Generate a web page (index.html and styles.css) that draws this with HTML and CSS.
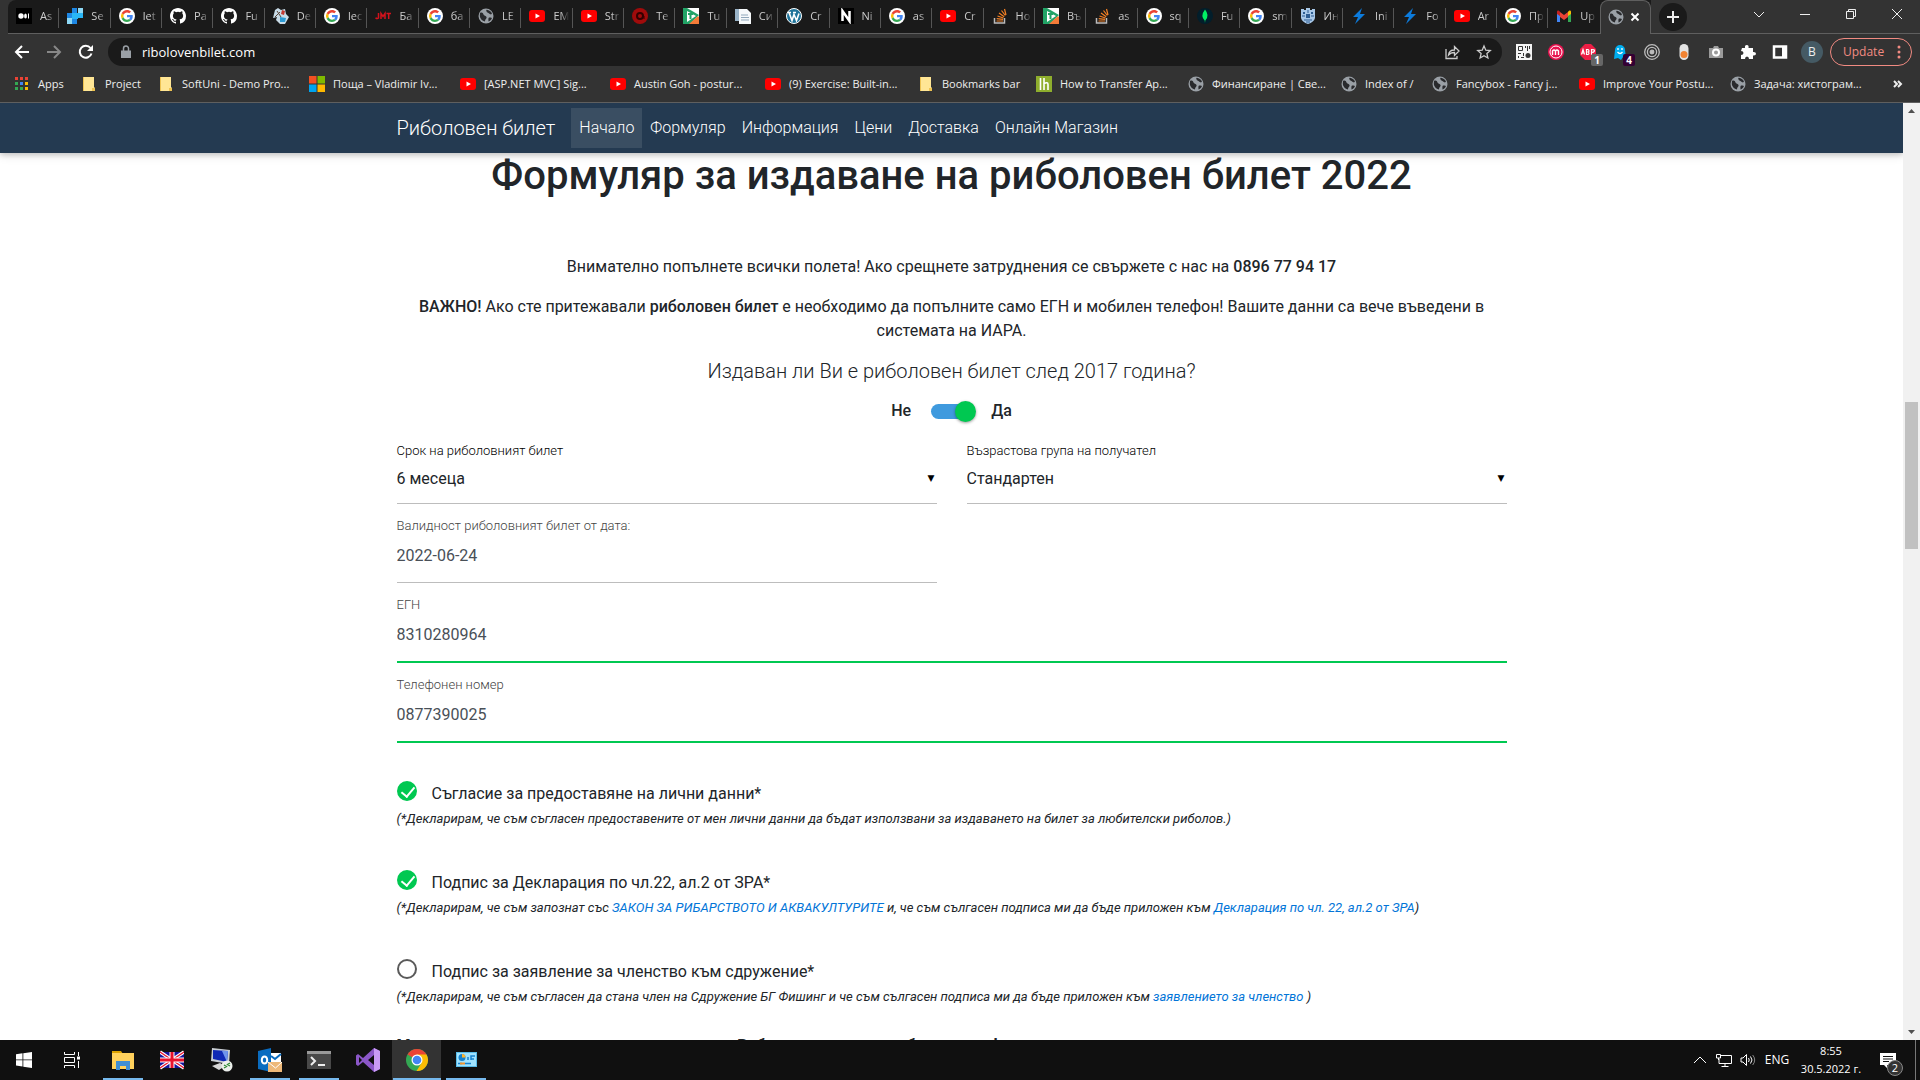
FILE: index.html
```html
<!DOCTYPE html>
<html lang="bg">
<head>
<meta charset="utf-8">
<title>Риболовен билет</title>
<link rel="stylesheet" href="styles.css">
</head>
<body>
<svg class="sprite" aria-hidden="true">
  <symbol id="google" viewBox="0 0 16 16"><circle cx="8" cy="8" r="8" fill="#fff"/><g transform="translate(2 2) scale(.25)"><path fill="#ea4335" d="M24 9.500c3.500 0 6.700 1.200 9.200 3.600l6.900-6.900C35.900 2.400 30.500 0 24 0 14.600 0 6.500 5.400 2.600 13.200l8 6.200C12.400 13.700 17.700 9.500 24 9.500z"/><path fill="#4285f4" d="M47 24.600c0-1.600-.2-3.100-.4-4.600H24v9h12.900c-.6 3-2.200 5.500-4.700 7.200l7.700 6C44.400 38 47 31.800 47 24.600z"/><path fill="#fbbc05" d="M10.500 28.600a14.500 14.500 0 0 1 0-9.200l-8-6.200a24 24 0 0 0 0 21.600z"/><path fill="#34a853" d="M24 48c6.500 0 11.900-2.100 15.900-5.800l-7.700-6c-2.200 1.500-4.900 2.300-8.200 2.300-6.300 0-11.600-4.200-13.500-9.900l-8 6.200C6.500 42.600 14.600 48 24 48z"/></g></symbol>
  <symbol id="youtube" viewBox="0 0 16 16"><rect y="2" width="16" height="12" rx="3" fill="#f00"/><path d="M6.500 5.500v5L11 8z" fill="#fff"/></symbol>
  <symbol id="github" viewBox="0 0 16 16"><path fill="#fff" d="M8 0C3.580 0 0 3.580 0 8c0 3.540 2.290 6.530 5.470 7.590.4.070.55-.17.55-.38 0-.19-.01-.82-.01-1.490-2.010.37-2.530-.49-2.690-.94-.09-.23-.48-.94-.82-1.130-.28-.15-.68-.52-.01-.53.63-.01 1.080.58 1.230.82.72 1.210 1.870.87 2.330.66.070-.52.28-.87.51-1.070-1.780-.2-3.640-.89-3.640-3.950 0-.87.31-1.590.82-2.150-.08-.2-.36-1.020.08-2.120 0 0 .67-.21 2.200.82a7.600 7.600 0 0 1 4 0c1.530-1.040 2.200-.82 2.200-.82.44 1.100.16 1.920.08 2.120.51.56.82 1.270.82 2.150 0 3.070-1.870 3.750-3.650 3.950.29.25.54.73.54 1.480 0 1.070-.01 1.930-.01 2.200 0 .21.15.46.55.38A8 8 0 0 0 16 8c0-4.420-3.580-8-8-8z"/></symbol>
  <symbol id="globe" viewBox="0 0 16 16"><circle cx="8" cy="8" r="7.500" fill="#9aa0a6"/><path fill="#292a2d" d="M2 5c2-1 3 0 3.500 1.500S8 7.500 8.500 9 7 11 7 13.500C4 13 2 10.500 1.800 8zM8 2c1 1 0 2 1.500 2.500S11 6 13 6.500l1-1C13 3.500 11 2 9 1.800zM11 9.500c1 0 2 0 3 .5-.7 2-2 3-3.500 3.500 0-1.500-.5-3 .5-4z"/></symbol>
  <symbol id="folder" viewBox="0 0 16 16"><path fill="#ffe695" d="M2 1h11v10l1 1v3H2z"/><path fill="#eec351" d="M2 1h1v14H2zM11 12h3v3h-3z"/></symbol>
  <symbol id="medium" viewBox="0 0 16 16"><path d="M0 0h16v16H0z"/><circle cx="5" cy="8" r="2.700" fill="#fff"/><ellipse cx="9.500" cy="8" rx="1.400" ry="2.500" fill="#fff"/><path d="M12 5.500h1v5h-1z" fill="#fff"/></symbol>
  <symbol id="squares" viewBox="0 0 16 16"><path fill="#1e88e5" d="M5 0h5v5H5zM0 5h5v5H0z"/><path fill="#29b6f6" d="M5 5h6v6H5zM11 5h5v5h-5z"/><path fill="#8ed8f5" d="M11 0h5v5h-5zM0 10h5v6H0z"/><path fill="#1e88e5" d="M5 11h5v5H5z"/></symbol>
  <symbol id="painter" viewBox="0 0 16 16"><path fill="#c9dce8" d="m2 2 3-2 3 2 4-1 1 5 3 3-4 7H7L3 12l1-3-4 1z"/><path fill="#2d9bd4" d="m7 9 6 1-1 4H7z"/><path fill="#c53b32" d="m9 2 3 1-1 4-3-1z"/><path d="m4 3 4 6M2 9l5-5" stroke="#5a463a"/></symbol>
  <symbol id="jmt" viewBox="0 0 16 16"><path fill="none" stroke="#d3121c" stroke-width="1.500" d="M3.500 5v5q-1 1-3 0M6 11V5.500l2 3 2-3V11M11.500 5.500H16M13.700 5v6"/></symbol>
  <symbol id="target" viewBox="0 0 16 16"><circle cx="8" cy="8" r="8" fill="#a00b0b"/><circle cx="8" cy="8" r="3" fill="none" stroke="#300" stroke-width="2"/><path d="M10 8h2v3" fill="none" stroke="#300"/></symbol>
  <symbol id="tick" viewBox="0 0 16 16"><path fill="#fff" d="M0 0h16v16H0z"/><path fill="#21a366" d="M0 0h4l12 7-9 9H0z"/><path fill="#f47b38" d="m6 16 9-8 1 1v7z"/><path fill="#fff" d="M4 3 13 8l-9 6z"/><path d="M5 6h5M7.500 6v5" stroke="#21a366" stroke-width="2"/></symbol>
  <symbol id="docs" viewBox="0 0 16 16"><path fill="#9bb5c9" d="M0 1h9v12H0z"/><path fill="#f6f9fb" d="M4 1h8l4 4v11H4z"/><path d="M6 7h7M6 9.500h8M6 12h8" stroke="#91a8bb"/></symbol>
  <symbol id="wordpress" viewBox="0 0 16 16"><circle cx="8" cy="8" r="7.500" fill="#21759b" stroke="#fff"/><path fill="none" stroke="#fff" stroke-width="1.600" d="m3 4.500 3 8 2-6 2.500 6 2.500-7M2 4.500h3M7 4.500h3"/></symbol>
  <symbol id="notion" viewBox="0 0 16 16"><path d="M0 0h16v16H0z"/><path d="M4.500 13V3l7 10V3" stroke="#fff" stroke-width="2.500" fill="none"/></symbol>
  <symbol id="stack" viewBox="0 0 16 16"><path d="M2.500 10v5h10v-5" fill="none" stroke="#bcbbbb" stroke-width="1.500"/><path d="M4.500 13h6.500M4.700 10.700l6.300.7M5.500 8l6 2M7 5l5.200 3.700M9.500 2.500l3.800 5M12.500 1l1.500 6" stroke="#f48024" stroke-width="1.200"/></symbol>
  <symbol id="leaf" viewBox="0 0 16 16"><circle cx="8" cy="8" r="8" fill="#021e2b"/><path fill="#00ed64" d="M8 1.500q5 6 .3 11L8 15l-.3-2.500Q3 8 8 1.500z"/></symbol>
  <symbol id="crest" viewBox="0 0 16 16"><path fill="#a8c8e8" d="M1 1h3v1h2V0h4v2h2V1h3v9q-1 4-7 6-6-2-7-6z"/><path d="M3 4h2v2H3zm8 0h2v2h-2zM6 6h4v4H6z" fill="#2e5d92"/><path d="M2 8h3m6 0h3M4 12h8M8 2v3M6 14h4" stroke="#2e5d92"/></symbol>
  <symbol id="bolt" viewBox="0 0 16 16"><path fill="#0c7bdc" d="M11 0 2 9h5l-3 7 10-10H9l2-6z"/></symbol>
  <symbol id="gmail" viewBox="0 0 16 16"><path fill="#4285f4" d="M1 14V4l3 2v8z"/><path fill="#34a853" d="M15 14V4l-3 2v8z"/><path fill="#ea4335" d="M4 9V4l4 3 4-3v5l-4 3z"/><path fill="#c5221f" d="M1 4c0-2 2-2 3 0v4L1 6z"/><path fill="#fbbc04" d="M15 4c0-2-2-2-3 0v4l3-2z"/></symbol>
  <symbol id="apps" viewBox="0 0 16 16"><path fill="#ea4335" d="M1 1h3v3H1zm5 0h3v3H6zm5 0h3v3h-3z"/><path fill="#34a853" d="M1 6h3v3H1zm0 5h3v3H1z"/><path fill="#4285f4" d="M6 6h3v3H6z"/><path fill="#fbbc04" d="M11 6h3v3h-3zm0 5h3v3h-3z"/><path fill="#34a853" d="M6 11h3v3H6z"/></symbol>
  <symbol id="microsoft" viewBox="0 0 16 16"><path fill="#f25022" d="M0 0h7.500v7.500H0z"/><path fill="#7fba00" d="M8.500 0H16v7.500H8.500z"/><path fill="#00a4ef" d="M0 8.500h7.500V16H0z"/><path fill="#ffb900" d="M8.500 8.500H16V16H8.500z"/></symbol>
  <symbol id="lh" viewBox="0 0 16 16"><path fill="#8fae2d" d="M0 0h16v16H0z"/><path d="M4.500 2v12M8 2v12M8 7.500q4-2 4 1V14" fill="none" stroke="#fff" stroke-width="1.600"/></symbol>
</svg>

<header class="browser">
  <div class="tabstrip">
    <div class="tabs">
      <button class="tab"><svg><use href="#medium"/></svg><span>As</span></button>
      <button class="tab"><svg><use href="#squares"/></svg><span>Se</span></button>
      <button class="tab"><svg><use href="#google"/></svg><span>let</span></button>
      <button class="tab"><svg><use href="#github"/></svg><span>Pa</span></button>
      <button class="tab"><svg><use href="#github"/></svg><span>Fu</span></button>
      <button class="tab"><svg><use href="#painter"/></svg><span>De</span></button>
      <button class="tab"><svg><use href="#google"/></svg><span>lec</span></button>
      <button class="tab"><svg><use href="#jmt"/></svg><span>Ба</span></button>
      <button class="tab"><svg><use href="#google"/></svg><span>ба</span></button>
      <button class="tab"><svg><use href="#globe"/></svg><span>LE</span></button>
      <button class="tab"><svg><use href="#youtube"/></svg><span>EM</span></button>
      <button class="tab"><svg><use href="#youtube"/></svg><span>Str</span></button>
      <button class="tab"><svg><use href="#target"/></svg><span>Te</span></button>
      <button class="tab"><svg><use href="#tick"/></svg><span>Tu</span></button>
      <button class="tab"><svg><use href="#docs"/></svg><span>Си</span></button>
      <button class="tab"><svg><use href="#wordpress"/></svg><span>Cr</span></button>
      <button class="tab"><svg><use href="#notion"/></svg><span>Ni</span></button>
      <button class="tab"><svg><use href="#google"/></svg><span>as</span></button>
      <button class="tab"><svg><use href="#youtube"/></svg><span>Cr</span></button>
      <button class="tab"><svg><use href="#stack"/></svg><span>Ho</span></button>
      <button class="tab"><svg><use href="#tick"/></svg><span>Въ</span></button>
      <button class="tab"><svg><use href="#stack"/></svg><span>as</span></button>
      <button class="tab"><svg><use href="#google"/></svg><span>sq</span></button>
      <button class="tab"><svg><use href="#leaf"/></svg><span>Fu</span></button>
      <button class="tab"><svg><use href="#google"/></svg><span>sm</span></button>
      <button class="tab"><svg><use href="#crest"/></svg><span>Ин</span></button>
      <button class="tab"><svg><use href="#bolt"/></svg><span>Ini</span></button>
      <button class="tab"><svg><use href="#bolt"/></svg><span>Fo</span></button>
      <button class="tab"><svg><use href="#youtube"/></svg><span>Ar</span></button>
      <button class="tab"><svg><use href="#google"/></svg><span>Пр</span></button>
      <button class="tab tab-last"><svg><use href="#gmail"/></svg><span>Up</span></button>
      <button class="tab tab-active" aria-label="Риболовен билет"><svg><use href="#globe"/></svg><svg class="tab-close" viewBox="0 0 16 16"><path d="m4.500 4.500 7 7m0-7-7 7"/></svg></button>
    </div>
    <div class="tab-tools">
      <button class="new-tab" aria-label="New tab"><svg viewBox="0 0 16 16"><path d="M8 2v12M2 8h12"/></svg></button>
      <div class="window-controls">
        <button aria-label="Search tabs"><svg viewBox="0 0 12 12"><path d="m1 4 5 5 5-5"/></svg></button>
        <button aria-label="Minimize"><svg viewBox="0 0 12 12"><path d="M1 6.500h10"/></svg></button>
        <button aria-label="Restore"><svg viewBox="0 0 12 12"><path d="M1.500 3.500h7v7h-7zM3.500 3V1.500h7v7H9"/></svg></button>
        <button aria-label="Close"><svg viewBox="0 0 12 12"><path d="m1 1 10 10M11 1 1 11"/></svg></button>
      </div>
    </div>
  </div>

  <div class="toolbar">
    <div class="nav-buttons">
      <button aria-label="Back"><svg viewBox="0 0 16 16"><path d="M15 8H2m6-6L2 8l6 6"/></svg></button>
      <button class="dim" aria-label="Forward"><svg viewBox="0 0 16 16"><path d="M1 8h13M8 2l6 6-6 6"/></svg></button>
      <button aria-label="Reload"><svg viewBox="0 0 16 16"><path d="M13.500 9.500A6 6 0 1 1 12.500 4"/><path class="solid" d="M15 1v6H9z"/></svg></button>
    </div>
    <div class="omnibox">
      <svg viewBox="0 0 16 16"><path fill="#9aa0a6" d="M3 6.500h10V14H3z"/><path fill="none" stroke="#9aa0a6" stroke-width="1.500" d="M5.500 7V4.500a2.500 2.500 0 0 1 5 0V7"/></svg>
      <input type="text" value="ribolovenbilet.com" aria-label="Address">
      <button aria-label="Share"><svg viewBox="0 0 16 16"><path d="M2 5v9.500h11V12M4.500 11q.5-5 6-5V2.500l4.500 4.500-4.500 4.500V8.500q-4 0-6 2.500z"/></svg></button>
      <button aria-label="Bookmark"><svg viewBox="0 0 16 16"><path d="m8 2 1.800 4.200 4.500.4-3.400 3 1 4.400L8 11.700 4.100 14l1-4.400-3.400-3 4.500-.4z"/></svg></button>
    </div>
    <div class="extensions">
      <button aria-label="QR"><svg viewBox="0 0 16 16"><path fill="#f4f4f4" d="M0 0h16v16H0z"/><path fill="none" stroke="#333" d="M2.500 2.500h4v4h-4zM9.500 2v2m2-2v5m2-5v3M2 9.500h3M2.500 12v2M5 13.500h3M7.500 9v3"/><circle cx="12" cy="11.500" r="2.500" fill="#333"/></svg></button>
      <button aria-label="Momentum"><svg viewBox="0 0 16 16"><circle cx="8" cy="8" r="8" fill="#e8124f"/><circle cx="8" cy="8" r="6" fill="none" stroke="#fff"/><path fill="none" stroke="#fff" stroke-width="1.400" d="M4.500 11V7q1.500-2 3 0v4m0-4q1.500-2 3 0v4"/></svg></button>
      <button aria-label="AdBlock Plus"><svg viewBox="0 0 16 16"><path fill="#ed1e45" d="M5 0h6l5 5v6l-5 5H5l-5-5V5z"/><path fill="none" stroke="#fff" stroke-width="1.200" d="M1.500 10.500 3 5.500l1.500 5M2 9h2M6.500 5.500v5h1.500q2-1.500 0-2.500 2-1 0-2.500zM11.500 11V5.500q3.500 0 3 1.500t-3 1.500"/></svg><span class="badge">1</span></button>
      <button aria-label="Ghostery"><svg viewBox="0 0 16 16"><path fill="#00aef0" d="M3 6a5 5 0 0 1 10 0l1 8-3-1-2 3-3-2-4 1z"/><path d="M6 4v2m4-2v2M5.500 8q2.500 3 5 0" fill="none" stroke="#fff" stroke-width="1.300"/></svg><span class="badge badge-purple">4</span></button>
      <button aria-label="Rings"><svg viewBox="0 0 16 16" fill="none" stroke="#bdbdbd" stroke-width="1.300"><circle cx="8" cy="8" r="7.300"/><circle cx="8" cy="8" r="4.600"/><circle cx="8" cy="8" r="1.800" fill="#bdbdbd"/></svg></button>
      <button aria-label="Switch"><svg viewBox="0 0 16 16"><rect x="3.500" y="0" width="9" height="16" rx="4.500" fill="#e3e3e3"/><circle cx="8" cy="10.500" r="3.500" fill="#f28332"/></svg></button>
      <button aria-label="Camera"><svg viewBox="0 0 16 16"><path fill="#9b9b9b" d="M1 4h4l1-2h4l1 2h4v10H1z"/><circle cx="8" cy="8.500" r="3" fill="#9b9b9b" stroke="#fff" stroke-width="2"/></svg></button>
      <button aria-label="Extensions"><svg viewBox="0 0 16 16"><path fill="#fff" d="M2 4h3q-.5-3 1.800-3T8.500 4H13v4q3-.3 3 1.800T13 11.500V15H9q0-2.500-2-2.500T5 15H1v-4q2.500 0 2.500-2T1 7z"/></svg></button>
      <button aria-label="Side panel"><svg viewBox="0 0 16 16"><path d="M2 2.500h12v11H2z" fill="none" stroke="#fff" stroke-width="2.500"/><path fill="#fff" d="M10 2h4v12h-4z"/></svg></button>
      <button class="avatar" aria-label="Profile">B</button>
    </div>
    <button class="update">Update<svg viewBox="0 0 4 16"><circle cx="2" cy="3" r="1.500"/><circle cx="2" cy="8" r="1.500"/><circle cx="2" cy="13" r="1.500"/></svg></button>
  </div>

  <nav class="bookmarks" aria-label="Bookmarks">
    <a href="#"><svg><use href="#apps"/></svg>Apps</a>
    <a href="#"><svg><use href="#folder"/></svg>Project</a>
    <a href="#"><svg><use href="#folder"/></svg>SoftUni - Demo Pro...</a>
    <a href="#"><svg><use href="#microsoft"/></svg>Поща – Vladimir Iv...</a>
    <a href="#"><svg><use href="#youtube"/></svg>[ASP.NET MVC] Sig...</a>
    <a href="#"><svg><use href="#youtube"/></svg>Austin Goh - postur...</a>
    <a href="#"><svg><use href="#youtube"/></svg>(9) Exercise: Built-in...</a>
    <a href="#"><svg><use href="#folder"/></svg>Bookmarks bar</a>
    <a href="#"><svg><use href="#lh"/></svg>How to Transfer Ap...</a>
    <a href="#"><svg><use href="#globe"/></svg>Финансиране | Све...</a>
    <a href="#"><svg><use href="#globe"/></svg>Index of /</a>
    <a href="#"><svg><use href="#globe"/></svg>Fancybox - Fancy j...</a>
    <a href="#"><svg><use href="#youtube"/></svg>Improve Your Postu...</a>
    <a href="#"><svg><use href="#globe"/></svg>Задача: хистограм...</a>
    <button aria-label="More bookmarks"><svg viewBox="0 0 12 12"><path d="m2 3 3 3-3 3m4-6 3 3-3 3"/></svg></button>
  </nav>
</header>

<div class="viewport">
  <div class="page">
    <nav class="site-nav">
      <div class="container">
        <a class="brand" href="#">Риболовен билет</a>
        <a class="link current" href="#">Начало</a>
        <a class="link" href="#">Формуляр</a>
        <a class="link" href="#">Информация</a>
        <a class="link" href="#">Цени</a>
        <a class="link" href="#">Доставка</a>
        <a class="link" href="#">Онлайн Магазин</a>
      </div>
    </nav>
    <main class="container">
      <h1>Формуляр за издаване на риболовен билет 2022</h1>
      <div class="intro">
        <p>Внимателно попълнете всички полета! Ако срещнете затруднения се свържете с нас на <strong>0896 77 94 17</strong></p>
        <p><strong>ВАЖНО!</strong> Ако сте притежавали <strong>риболовен билет</strong> е необходимо да попълните само ЕГН и мобилен телефон! Вашите данни са вече въведени в системата на ИАРА.</p>
        <h2>Издаван ли Ви е риболовен билет след 2017 година?</h2>
      </div>
      <form>
        <label class="switch">Не<input type="checkbox" checked>Да</label>
        <div class="row">
          <div class="field field-select">
            <label for="term">Срок на риболовният билет</label>
            <select id="term"><option>6 месеца</option></select>
            <span class="caret" aria-hidden="true">▼</span>
          </div>
          <div class="field field-select">
            <label for="age">Възрастова група на получател</label>
            <select id="age"><option>Стандартен</option></select>
            <span class="caret" aria-hidden="true">▼</span>
          </div>
        </div>
        <div class="row">
          <div class="field">
            <label for="date">Валидност риболовният билет от дата:</label>
            <input type="text" id="date" value="2022-06-24">
          </div>
        </div>
        <div class="field valid">
          <label for="egn">ЕГН</label>
          <input type="text" id="egn" value="8310280964">
        </div>
        <div class="field valid">
          <label for="phone">Телефонен номер</label>
          <input type="text" id="phone" value="0877390025">
        </div>
        <div class="consents">
          <div class="consent">
            <div class="consent-head"><input type="checkbox" id="c1" checked><label for="c1">Съгласие за предоставяне на лични данни*</label></div>
            <p>(*Декларирам, че съм съгласен предоставените от мен лични данни да бъдат използвани за издаването на билет за любителски риболов.)</p>
          </div>
          <div class="consent">
            <div class="consent-head"><input type="checkbox" id="c2" checked><label for="c2">Подпис за Декларация по чл.22, ал.2 от ЗРА*</label></div>
            <p>(*Декларирам, че съм запознат със <a href="#">ЗАКОН ЗА РИБАРСТВОТО И АКВАКУЛТУРИТЕ</a> и, че съм сългасен подписа ми да бъде приложен към <a href="#">Декларация по чл. 22, ал.2 от ЗРА</a>)</p>
          </div>
          <div class="consent">
            <div class="consent-head"><input type="checkbox" id="c3"><label for="c3">Подпис за заявление за членство към сдружение*</label></div>
            <p>(*Декларирам, че съм съгласен да стана член на Сдружение БГ Фишинг и че съм сългасен подписа ми да бъде приложен към <a href="#">заявлението за членство</a> )</p>
          </div>
        </div>
        <p class="delivery">Моля посочете мястото си за получаване на Риболовният ви е нов билет, или формуляр</p>
      </form>
    </main>
  </div>
  <div class="scrollbar" aria-hidden="true">
    <svg viewBox="0 0 17 17"><path d="m5 10 3.500-4L12 10z"/></svg>
    <div class="thumb"></div>
    <svg viewBox="0 0 17 17"><path d="m5 7 3.500 4L12 7z"/></svg>
  </div>
</div>

<footer class="taskbar">
  <button aria-label="Start"><svg viewBox="0 0 16 16"><path fill="#fff" d="m0 2.300 6.500-1v6.200H0zm7.300-1.100L16 0v7.500H7.300zM0 8.300h6.500v6.200l-6.500-1zm7.300 0H16V16l-8.700-1.200z"/></svg></button>
  <button class="task-view" aria-label="Task view"><svg viewBox="0 0 16 16" fill="none" stroke="#fff"><path d="M.5 0v2.500h10V0M.5 5.500h10v5H.5zM.5 16v-2.500h10V16M14.500 0v4m0 5v7"/><path d="M13 4.500h3v3h-3z" fill="#fff" stroke="none"/></svg></button>
  <button class="app running" aria-label="File Explorer"><svg viewBox="0 0 24 24"><path fill="#dba100" d="M1 3h9l2 3v3H1z"/><path fill="#ffd15c" d="M1 5h22v16H1z"/><path fill="#3f8fd4" d="M5 13h14v9h-4v-4H9v4H5z"/></svg></button>
  <button class="app" aria-label="Language"><svg viewBox="0 0 24 24"><path fill="#14149c" d="M0 4h24v16H0z"/><path d="m0 4 24 16M24 4 0 20" stroke="#fff" stroke-width="3.500"/><path d="m0 4 24 16M24 4 0 20" stroke="#e8112d" stroke-width="1.300"/><path d="M12 4v16M0 12h24" stroke="#fff" stroke-width="5"/><path d="M12 4v16M0 12h24" stroke="#e8112d" stroke-width="3"/></svg></button>
  <button class="app" aria-label="Remote Desktop"><svg viewBox="0 0 24 24"><path fill="#c9ced4" d="m3 0 18 2-1 14L2 13z"/><path fill="#1029b5" d="m4 2 15 1-1 11L4 11z"/><path fill="#6f94ec" d="m13 3 6 0-1 11z"/><path fill="#d7d7d7" d="m3 18 8-3 5 3-6 4z"/><circle cx="18" cy="18" r="5.500" fill="#ecefec"/><path d="m15 17 2.500 1.500L15 20m6-5-2.500 1.500L21 18" fill="none" stroke="#2d8a34" stroke-width="1.300"/></svg></button>
  <button class="app running" aria-label="Outlook"><svg viewBox="0 0 24 24"><path fill="#fff" d="M12 5h11v10H12z"/><path d="m13 8 4 3 6-5" fill="none" stroke="#0a6cc0" stroke-width="2"/><path fill="#0a6cc0" d="m0 3 13-3v24L0 21z"/><ellipse cx="6.500" cy="12" rx="2.700" ry="3.600" fill="none" stroke="#fff" stroke-width="2"/><path fill="#edb879" d="M10 14h15v11H10z"/><path d="m10 14 7.500 6L24 14" fill="none" stroke="#fff"/></svg></button>
  <button class="app running" aria-label="Terminal"><svg viewBox="0 0 24 24"><path fill="#484848" d="M0 3h24v18H0z"/><path fill="#999" d="M0 3h24v3H0z"/><path d="m4 9 4 4-4 4M11 17h7" fill="none" stroke="#eee" stroke-width="2"/></svg></button>
  <button class="app" aria-label="Visual Studio"><svg viewBox="0 0 24 24"><path fill="#8b57c8" d="M2 6 0 7.500v9L2 18l5-4L18 24l6-3V3l-6-3L7 10zm1 3 3 3-3 3zm15-2v10l-6-5z" fill-rule="evenodd"/><path fill="#c99bf5" d="m18 0 6 3v18l-6 3z"/></svg></button>
  <button class="app running focused" aria-label="Chrome"><svg viewBox="0 0 24 24"><circle cx="12" cy="12" r="11" fill="#34a853"/><path fill="#ea4335" d="M12 12 2.500 6.500a11 11 0 0 1 19 0z"/><path fill="#fbbc05" d="M12 12V6.500h9.500a11 11 0 0 1-10 16.500l5-8z"/><circle cx="12" cy="12" r="5.500" fill="#fff"/><circle cx="12" cy="12" r="4.300" fill="#4285f4"/></svg></button>
  <button class="app running" aria-label="Control Panel"><svg viewBox="0 0 24 24"><path fill="#58bce9" d="M2 4h21v15H2z"/><path fill="#a0e3ff" d="M3 5h19v13H3z"/><circle cx="8" cy="9.500" r="3.500" fill="#1682cf"/><path fill="#ffb52e" d="M8 9.500V6a3.500 3.500 0 0 1 3.500 3.500z"/><path d="M14 12V9m3 3V8h4m-4 3h3M4 15.500h4m3 0h6" stroke="#1682cf" stroke-width="1.500" fill="none"/><path d="M6 15.500h5" stroke="#f1932d" stroke-width="2"/></svg></button>
  <div class="tray">
    <button aria-label="Hidden icons"><svg viewBox="0 0 16 16"><path d="m2 11 6-6 6 6"/></svg></button>
    <button aria-label="Network"><svg viewBox="0 0 16 16"><path d="M5 3.500h10.500v8H3V7M9 11.500v3M5.500 14.500h7M.5 2.500h4v3.500h-4zM2.500 6v2"/></svg></button>
    <button aria-label="Volume"><svg viewBox="0 0 16 16"><path d="M1 6h2l3.500-3.500v11L3 10H1zM8.500 6q1.500 2 0 4M10.500 4.500q3 3.500 0 7"/><path d="M12.700 3q4 5 0 10" opacity=".5"/></svg></button>
    <button class="lang">ENG</button>
    <button class="clock"><time>8:55</time><span>30.5.2022 г.</span></button>
    <button class="notify" aria-label="Notifications"><svg viewBox="0 0 16 16"><path fill="#fff" stroke="none" d="M0 1h16v12H7v3l-3-3H0z"/><path d="M3 4.500h10M3 7h10M3 9.500h6" stroke="#111"/></svg><span class="count">2</span></button>
  </div>
</footer>
</body>
</html>
```
FILE: styles.css
```css
* { box-sizing: border-box; }

body {
  margin: 0;
  height: 100vh;
  display: flex;
  flex-direction: column;
  overflow: hidden;
  font-family: Roboto, "Liberation Sans", sans-serif;
  font-size: 16px;
  line-height: 24px;
  color: #212529;
  background: #fff;
}

button { padding: 0; border: 0; background: none; color: inherit; font: inherit; }
a { color: inherit; text-decoration: none; }
svg { display: block; width: 16px; height: 16px; flex: none; }
.sprite { display: none; }

/* Browser chrome */
.browser {
  flex: none;
  background: #333;
  color: #eee;
  font-family: "Open Sans", "Noto Sans", sans-serif;
  font-size: 11px;
  line-height: 16px;
  border-bottom: 1px solid #5f5f5f;
}
.tabstrip { display: flex; height: 34px; padding-left: 8px; }
.tabs { flex: 1; min-width: 0; display: flex; background: #1a1a1a; border-top-left-radius: 8px; }
.tab {
  flex: 1 1 0;
  min-width: 0;
  display: flex;
  align-items: center;
  gap: 8px;
  padding: 0 2px 1px 8px;
  border-bottom: 1px solid #5f5f5f;
  background: linear-gradient(#555, #555) right 8px / 1px 20px no-repeat;
  color: #ccc;
  text-align: left;
}
.tab span {
  flex: 1;
  min-width: 0;
  overflow: hidden;
  white-space: nowrap;
  mask-image: linear-gradient(90deg, #000 40%, transparent 90%);
}
.tab-last { background: none; }
.tab-active {
  gap: 3px;
  padding: 0 1px 1px 7px;
  background: #333;
  border: 1px solid #5f5f5f;
  border-bottom: 0;
  border-radius: 8px 8px 0 0;
}
.tab-close { fill: none; stroke: #fff; stroke-width: 2; }
.tab-tools {
  flex: none;
  width: 269px;
  display: flex;
  justify-content: space-between;
  padding-left: 8px;
  border-bottom: 1px solid #5f5f5f;
}
.new-tab {
  display: grid;
  place-items: center;
  width: 28px;
  height: 28px;
  margin-top: 3px;
  border-radius: 50%;
  background: #1a1a1a;
}
.new-tab svg { width: 16px; fill: none; stroke: #eee; stroke-width: 2; }
.window-controls { display: flex; }
.window-controls button { display: grid; place-items: center; width: 46px; height: 28px; }
.window-controls svg { width: 12px; height: 12px; fill: none; stroke: #eee; }

.toolbar { display: flex; align-items: center; height: 36px; padding: 0 8px 0 6px; }
.nav-buttons { display: flex; width: 102px; }
.nav-buttons button { display: grid; place-items: center; width: 32px; height: 28px; }
.nav-buttons svg { fill: none; stroke: #fff; stroke-width: 2; }
.nav-buttons .solid { fill: #fff; stroke: none; }
.nav-buttons .dim svg { stroke: #888; }
.omnibox {
  flex: 1;
  display: flex;
  align-items: center;
  height: 28px;
  padding: 0 2px 0 10px;
  border-radius: 14px;
  background: #1a1a1a;
}
.omnibox input {
  flex: 1;
  min-width: 0;
  padding: 0 8px;
  border: 0;
  background: none;
  color: #fff;
  font-family: inherit;
  font-size: 13px;
}
.omnibox button { display: grid; place-items: center; width: 32px; }
.omnibox button svg { fill: none; stroke: #ccc; stroke-width: 1.3; }
.extensions { display: flex; align-items: center; padding-left: 6px; }
.extensions button { position: relative; display: grid; place-items: center; width: 32px; height: 28px; }
.badge {
  position: absolute;
  right: 1px;
  bottom: 0;
  width: 12px;
  height: 12px;
  border-radius: 2px;
  background: #666;
  color: #fff;
  font-size: 10px;
  font-weight: 700;
  line-height: 12px;
}
.badge-purple { background: #330033; }
.extensions .avatar { width: 22px; height: 22px; margin: 0 5px; border-radius: 50%; background: #455a64; font-size: 12px; }
.update {
  display: flex;
  align-items: center;
  justify-content: space-between;
  width: 82px;
  height: 28px;
  margin-left: 2px;
  padding: 0 10px 0 12px;
  border: 1px solid #f28b82;
  border-radius: 14px;
  color: #f28b82;
  font-size: 12px;
}
.update svg { width: 4px; fill: #f28b82; }

.bookmarks {
  display: grid;
  grid-template-columns: 67px 77px 151px 151px 150px 155px 153px 118px 152px 153px 91px 147px 151px 151px 1fr;
  align-items: center;
  height: 32px;
  padding: 0 16px 4px 14px;
}
.bookmarks a { display: flex; align-items: center; gap: 8px; white-space: nowrap; }
.bookmarks button { justify-self: end; }
.bookmarks button svg { width: 12px; height: 12px; fill: none; stroke: #eee; stroke-width: 2; }

/* Web page */
.viewport { flex: 1; min-height: 0; display: flex; }
.page { flex: 1; min-width: 0; overflow: hidden; }
.container { max-width: 1140px; margin: 0 auto; padding: 0 15px; }
.site-nav { background: #243a51; color: #fff; box-shadow: 0 2px 5px rgba(0, 0, 0, .16), 0 2px 10px rgba(0, 0, 0, .12); }
.site-nav .container { display: flex; align-items: center; height: 50px; font-weight: 300; }
.brand { margin-right: 16px; font-size: 20px; }
.link { padding: 8px; }
.current { background: #3a4e62; }

h1 { margin: 0 0 56px; font-size: 40px; font-weight: 500; line-height: 46px; text-align: center; }
.intro { text-align: center; }
.intro p { margin: 0 0 16px; }
strong { font-weight: 500; }
h2 { margin: 0 0 16px; font-size: 20px; font-weight: 300; line-height: 24px; }

.switch { display: flex; align-items: center; justify-content: center; height: 24px; margin-bottom: 20px; font-weight: 500; }
.switch input {
  appearance: none;
  position: relative;
  width: 40px;
  height: 15px;
  margin: 0 20px;
  border-radius: 8px;
  background: #3f9ade;
}
.switch input::after {
  content: "";
  position: absolute;
  top: -3px;
  right: -5px;
  width: 21px;
  height: 21px;
  border-radius: 50%;
  background: #00c851;
  box-shadow: 0 1px 3px rgba(0, 0, 0, .4);
}

.row { display: grid; grid-template-columns: 1fr 1fr; gap: 30px; }
.field { position: relative; display: flex; flex-direction: column; height: 79px; }
.field label { font-size: 13px; font-weight: 300; line-height: 16px; color: #444; }
.field input {
  height: 49px;
  padding: 0 0 6px;
  border: 0;
  border-bottom: 1px solid #bdbdbd;
  background: none;
  color: #495057;
  font: inherit;
}
.field-select { height: 75px; }
.field-select label { color: #000; }
.field-select select {
  appearance: none;
  height: 45px;
  padding: 0 0 5px;
  border: 0;
  border-bottom: 1px solid #bdbdbd;
  border-radius: 0;
  background: none;
  color: #212529;
  font: inherit;
}
.caret {
  position: absolute;
  top: 23px;
  right: 2px;
  color: #000;
  font-family: "DejaVu Sans", sans-serif;
  font-size: 9px;
  line-height: 24px;
  pointer-events: none;
}
.valid { height: 80px; }
.valid input { height: 50px; border-bottom: 2px solid #00c851; }

.consents { padding-top: 25px; }
.consent { margin-bottom: 42px; }
.consent:last-child { margin-bottom: 27px; }
.consent-head { display: flex; align-items: center; gap: 15px; height: 24px; }
.consent-head input {
  appearance: none;
  position: relative;
  width: 20px;
  height: 20px;
  margin: 0 0 6px;
  border: 2px solid #5a5a5a;
  border-radius: 50%;
}
.consent-head input:checked { border-color: #00c851; background: #00c851; }
.consent-head input:checked::after {
  content: "";
  position: absolute;
  top: 1px;
  left: 5px;
  width: 6px;
  height: 11px;
  border: solid #fff;
  border-width: 0 2px 2px 0;
  transform: rotate(40deg);
}
.consent p { margin: 3px 0 0; font-size: 13px; font-style: italic; line-height: 20px; }
.consent a { color: #0275d8; }
.delivery { margin: 0; font-weight: 700; }

.scrollbar { flex: none; display: flex; flex-direction: column; width: 17px; background: #f1f1f1; }
.scrollbar svg { width: 17px; height: 17px; fill: #505050; }
.thumb { flex: 0 0 147px; margin: 282px 2px auto; background: #c1c1c1; }

/* Taskbar */
.taskbar {
  flex: none;
  display: flex;
  height: 40px;
  background: #101010;
  color: #fff;
  font-family: "Open Sans", "Noto Sans", sans-serif;
  font-size: 11px;
}
.taskbar > button { display: grid; place-items: center; width: 48px; }
.taskbar .task-view { margin-right: 2px; }
.taskbar .app { width: 49px; }
.app svg { width: 24px; height: 24px; }
.running { background: linear-gradient(#76b9ed, #76b9ed) center bottom / 40px 2px no-repeat; }
.focused { background: linear-gradient(#76b9ed, #76b9ed) center bottom / 48px 2px no-repeat #333; }
.tray { display: flex; margin-left: auto; padding-right: 4px; }
.tray button { display: grid; place-items: center; width: 24px; }
.tray svg { fill: none; stroke: #fff; }
.tray .lang { width: 34px; font-size: 12px; }
.tray .clock { width: 74px; align-content: center; line-height: 18px; }
.tray .notify { position: relative; width: 48px; padding-right: 8px; border-right: 1px solid #777; }
.count {
  position: absolute;
  right: 12px;
  bottom: 4px;
  width: 16px;
  height: 16px;
  border: 1px solid #888;
  border-radius: 50%;
  background: #333;
  line-height: 14px;
}
```
